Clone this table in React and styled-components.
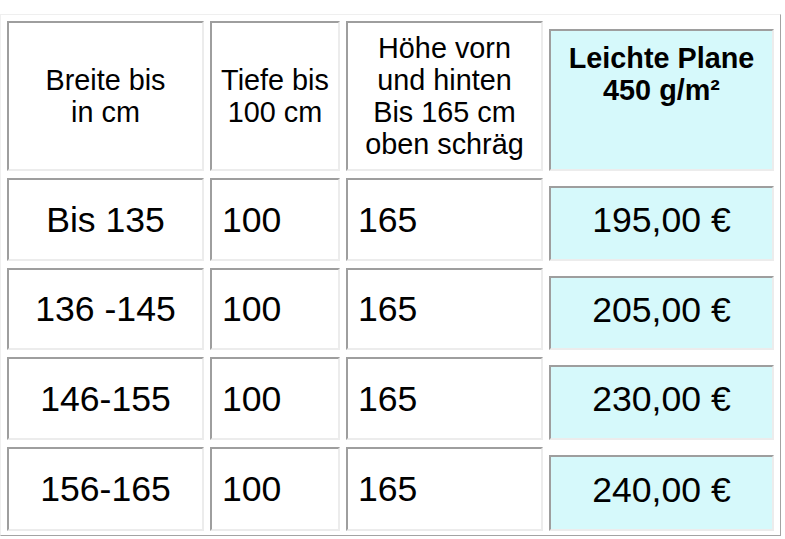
import React from 'react';
import styled, { createGlobalStyle } from 'styled-components';

const GlobalStyle = createGlobalStyle`
  body {
    margin: 0;
    background: #ffffff;
    font-family: "Liberation Sans", Arial, sans-serif;
    color: #000;
  }
`;

const PriceTable = styled.div`
  display: grid;
  grid-template-columns: 197px 130px 197px 225px;
  grid-template-rows: 150px 83px 82px 83px 84px;
  column-gap: 6px;
  row-gap: 7px;
  width: max-content;
  margin-top: 14px;
  padding: 6px 6px 4px 6px;
  border: 1px solid;
  border-color: #efefef #a3a3a3 #a3a3a3 #efefef;
  background: #ffffff;
`;

const Cell = styled.div`
  display: flex;
  flex-direction: column;
  justify-content: ${(p) => (p.$top ? 'flex-start' : 'center')};
  align-items: ${(p) => (p.$left ? 'flex-start' : 'center')};
  margin-top: ${(p) => (p.$tint ? '8px' : '0')};
  padding: ${(p) =>
    p.$top ? '11px 0 0' : p.$left ? '0 0 0 10px' : p.$tint ? '0 0 7px' : '0'};
  border-style: solid;
  border-width: 2px;
  border-color: #9e9e9e #ececec #ececec #9e9e9e;
  background: ${(p) => (p.$tint ? '#d6f9fb' : '#ffffff')};
  font-size: 35.6px;
  line-height: 40px;
`;

const HeadText = styled.div`
  font-size: 28.8px;
  line-height: 32px;
  text-align: center;
  font-weight: ${(p) => (p.$bold ? 700 : 400)};
`;

const rows = [
  ['Bis 135', '100', '165', '195,00 €'],
  ['136 -145', '100', '165', '205,00 €'],
  ['146-155', '100', '165', '230,00 €'],
  ['156-165', '100', '165', '240,00 €'],
];

const App = () => {
  return (
    <>
      <GlobalStyle />
      <PriceTable>
        <Cell>
          <HeadText>Breite bis<br />in cm</HeadText>
        </Cell>
        <Cell>
          <HeadText>Tiefe bis<br />100 cm</HeadText>
        </Cell>
        <Cell>
          <HeadText>Höhe vorn<br />und hinten<br />Bis 165 cm<br />oben schräg</HeadText>
        </Cell>
        <Cell $tint $top>
          <HeadText $bold>Leichte Plane<br />450 g/m²</HeadText>
        </Cell>

        {rows.map((r) => (
          <React.Fragment key={r[0]}>
            <Cell>{r[0]}</Cell>
            <Cell $left>{r[1]}</Cell>
            <Cell $left>{r[2]}</Cell>
            <Cell $tint>{r[3]}</Cell>
          </React.Fragment>
        ))}
      </PriceTable>
    </>
  );
};

export default App;
